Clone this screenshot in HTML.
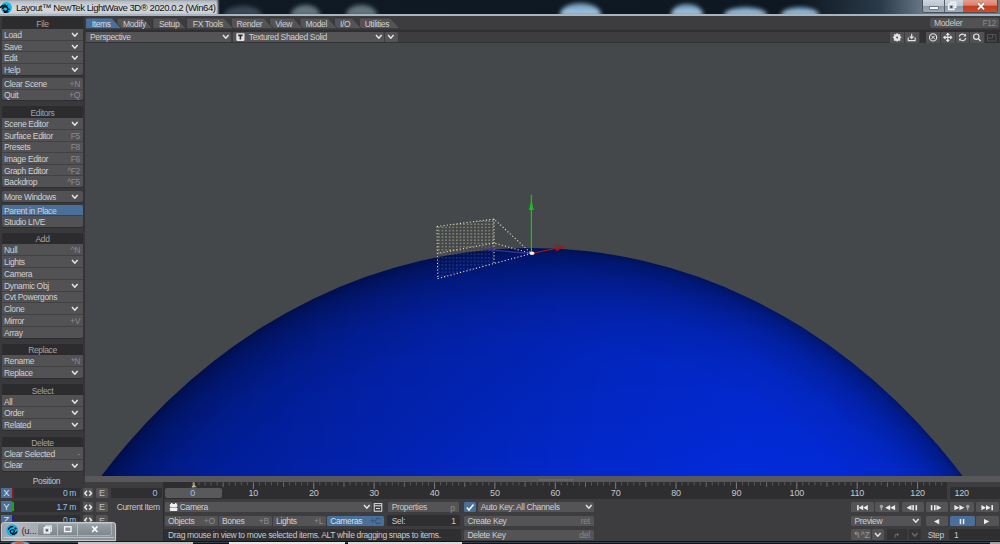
<!DOCTYPE html><html><head><meta charset="utf-8"><style>
html,body{margin:0;padding:0;width:1000px;height:544px;overflow:hidden;background:#3d3d40;font-family:"Liberation Sans",sans-serif;}
body>div,body>svg{position:absolute;}
</style></head><body>
<div style="left:0;top:0;width:1000px;height:15px;background:linear-gradient(90deg,#18222c 0,#101a24 240px,#0e1822 800px,#2a3a48 880px,#6a7a88 925px);overflow:hidden"><div style="position:absolute;left:224px;top:6px;width:38px;height:10px;background:rgba(100,120,135,.5);border-radius:50% 50% 0 0/90% 90% 0 0;filter:blur(2px)"></div><div style="position:absolute;left:291px;top:5px;width:29px;height:11px;background:rgba(130,150,158,.75);border-radius:50% 50% 0 0/90% 90% 0 0;filter:blur(2px)"></div><div style="position:absolute;left:346px;top:5px;width:31px;height:11px;background:rgba(130,150,158,.75);border-radius:50% 50% 0 0/90% 90% 0 0;filter:blur(2px)"></div><div style="position:absolute;left:560px;top:3px;width:41px;height:13px;background:linear-gradient(rgba(130,175,215,.8),rgba(175,215,245,1));border-radius:50% 50% 0 0/90% 90% 0 0;filter:blur(2px)"></div><div style="position:absolute;left:671px;top:4px;width:32px;height:12px;background:linear-gradient(rgba(130,175,215,.8),rgba(175,215,245,1));border-radius:50% 50% 0 0/90% 90% 0 0;filter:blur(2px)"></div><div style="position:absolute;left:724px;top:6.5px;width:43px;height:9.5px;background:linear-gradient(rgba(130,175,215,.8),rgba(175,215,245,1));border-radius:50% 50% 0 0/90% 90% 0 0;filter:blur(2px)"></div><div style="position:absolute;left:781px;top:6.5px;width:38px;height:9.5px;background:linear-gradient(rgba(130,175,215,.8),rgba(175,215,245,1));border-radius:50% 50% 0 0/90% 90% 0 0;filter:blur(2px)"></div><div style="position:absolute;left:-4px;top:-1px;width:222px;height:17px;background:linear-gradient(#a4acb4 0,#c8ccd2 5px,#d6d9dc 9px,#d0d4d8 13px,#b8c0c8 16px);filter:blur(1px)"></div></div>
<div style="left:0px;top:14px;width:1000px;height:1.5px;background:#a8b4c0;"></div>
<svg style="left:0;top:1px" width="14" height="14"><circle cx="6.4" cy="6.6" r="5.6" fill="#14b8ec"/><path d="M0 6.8 Q2 4.5 4 4.2 Q6 3.6 7.5 4.2 M2.6 8 Q2.8 5.8 5 5.6 Q7.6 5.6 7.8 8.2 Q7.6 10.2 5.4 10.4 Q3.6 10.2 3.4 8.6 M8.4 8.6 L9.6 8.2 M3.8 11.2 Q6.5 11.6 8.5 10.6" stroke="#04121e" stroke-width="1.5" fill="none"/><circle cx="5.4" cy="8.2" r="1.1" fill="#1ec8f8"/><circle cx="6.6" cy="3.4" r="0.9" fill="#30d0ff"/></svg>
<div style="left:16px;top:1.5px;height:12px;line-height:12px;color:#111;font-size:9.6px;letter-spacing:-0.48px;white-space:nowrap;">Layout™ NewTek LightWave 3D® 2020.0.2 (Win64)</div>
<div style="left:922.2px;top:-1px;width:75.7px;height:13.8px;box-sizing:border-box;border:1px solid #46525e;border-top:none;border-radius:0 0 3px 3px;overflow:hidden;background:#9aa8b6"><div style="position:absolute;left:0;top:0;width:20.5px;height:13px;background:linear-gradient(#d0d8e0 0,#bcc6d0 50%,#8898a8 54%,#9cacbc 100%)"></div><div style="position:absolute;left:20.5px;top:0;width:0.9px;height:13px;background:#56626e"></div><div style="position:absolute;left:21.4px;top:0;width:18.6px;height:13px;background:linear-gradient(#d0d8e0 0,#bcc6d0 50%,#8898a8 54%,#9cacbc 100%)"></div><div style="position:absolute;left:40px;top:0;width:35px;height:13px;background:linear-gradient(#e8a090 0,#d88474 48%,#c43c1c 54%,#d04c2c 100%)"></div></div>
<div style="left:930px;top:6.6px;width:7.5px;height:2.2px;background:#f8f8f8;box-shadow:0 0 0 0.5px #4a5058;"></div>
<svg style="left:947px;top:0.5px" width="11" height="10"><rect x="3.6" y="1.2" width="5.2" height="5.2" fill="none" stroke="#f4f4f4" stroke-width="1.3"/><rect x="1.6" y="3.2" width="5.4" height="5.4" fill="#aab6c2" stroke="#f4f4f4" stroke-width="1.3"/><rect x="3.4" y="5" width="1.9" height="1.9" fill="#3a4450"/></svg>
<svg style="left:975px;top:0.5px" width="12" height="11"><path d="M3 2.2 L9 8.4 M9 2.2 L3 8.4" stroke="#5a2a20" stroke-width="3" stroke-opacity="0.5"/><path d="M3 2.2 L9 8.4 M9 2.2 L3 8.4" stroke="#fafafa" stroke-width="2"/></svg>
<div style="left:0px;top:15.5px;width:85px;height:528.5px;background:#39393c;"></div>
<div style="left:83.2px;top:15.5px;width:1.8px;height:461px;background:#343437;"></div>
<div style="left:2px;top:17px;width:81px;height:11.5px;background:#2c2c2e;border-radius:2px 2px 0 0;"></div>
<div style="left:2px;top:17.55px;height:12px;line-height:12px;color:#a4a4a4;font-size:8.5px;letter-spacing:-0.35px;white-space:nowrap;width:81px;text-align:center;">File</div>
<div style="left:2px;top:28.5px;width:81px;height:46.4px;background:#525255;border-radius:0 0 2px 2px;box-shadow:0 1px 0 #2e2e30;"></div>
<div style="left:4px;top:28.9px;height:12px;line-height:12px;color:#d0d0d0;font-size:8.5px;letter-spacing:-0.35px;white-space:nowrap;">Load</div>
<svg style="left:70.7px;top:31.999999999999993px" width="7.6" height="5.2"><polyline points="1,1 3.8,4.2 6.6,1" fill="none" stroke="#e6e6e6" stroke-width="1.45"/></svg>
<div style="left:2px;top:39.6px;width:81px;height:1px;background:#414144;"></div>
<div style="left:4px;top:40.5px;height:12px;line-height:12px;color:#d0d0d0;font-size:8.5px;letter-spacing:-0.35px;white-space:nowrap;">Save</div>
<svg style="left:70.7px;top:43.599999999999994px" width="7.6" height="5.2"><polyline points="1,1 3.8,4.2 6.6,1" fill="none" stroke="#e6e6e6" stroke-width="1.45"/></svg>
<div style="left:2px;top:51.2px;width:81px;height:1px;background:#414144;"></div>
<div style="left:4px;top:52.1px;height:12px;line-height:12px;color:#d0d0d0;font-size:8.5px;letter-spacing:-0.35px;white-space:nowrap;">Edit</div>
<svg style="left:70.7px;top:55.199999999999996px" width="7.6" height="5.2"><polyline points="1,1 3.8,4.2 6.6,1" fill="none" stroke="#e6e6e6" stroke-width="1.45"/></svg>
<div style="left:2px;top:62.8px;width:81px;height:1px;background:#414144;"></div>
<div style="left:4px;top:63.69999999999999px;height:12px;line-height:12px;color:#d0d0d0;font-size:8.5px;letter-spacing:-0.35px;white-space:nowrap;">Help</div>
<svg style="left:70.7px;top:66.8px" width="7.6" height="5.2"><polyline points="1,1 3.8,4.2 6.6,1" fill="none" stroke="#e6e6e6" stroke-width="1.45"/></svg>
<div style="left:2px;top:78px;width:81px;height:22.2px;background:#525255;border-radius:2px 2px 2px 2px;box-shadow:0 1px 0 #2e2e30;"></div>
<div style="left:4px;top:78.14999999999999px;height:12px;line-height:12px;color:#d0d0d0;font-size:8.5px;letter-spacing:-0.35px;white-space:nowrap;">Clear Scene</div>
<div style="left:50px;top:78.14999999999999px;height:12px;line-height:12px;color:#8a8a8a;font-size:8.5px;letter-spacing:-0.35px;white-space:nowrap;width:30px;text-align:right;">+N</div>
<div style="left:2px;top:88.6px;width:81px;height:1px;background:#414144;"></div>
<div style="left:4px;top:89.24999999999999px;height:12px;line-height:12px;color:#d0d0d0;font-size:8.5px;letter-spacing:-0.35px;white-space:nowrap;">Quit</div>
<div style="left:50px;top:89.24999999999999px;height:12px;line-height:12px;color:#8a8a8a;font-size:8.5px;letter-spacing:-0.35px;white-space:nowrap;width:30px;text-align:right;">+Q</div>
<div style="left:2px;top:106.3px;width:81px;height:11.5px;background:#2c2c2e;border-radius:2px 2px 0 0;"></div>
<div style="left:2px;top:106.85px;height:12px;line-height:12px;color:#a4a4a4;font-size:8.5px;letter-spacing:-0.35px;white-space:nowrap;width:81px;text-align:center;">Editors</div>
<div style="left:2px;top:117.8px;width:81px;height:69.6px;background:#525255;border-radius:0 0 2px 2px;box-shadow:0 1px 0 #2e2e30;"></div>
<div style="left:4px;top:118.19999999999999px;height:12px;line-height:12px;color:#d0d0d0;font-size:8.5px;letter-spacing:-0.35px;white-space:nowrap;">Scene Editor</div>
<svg style="left:70.7px;top:121.3px" width="7.6" height="5.2"><polyline points="1,1 3.8,4.2 6.6,1" fill="none" stroke="#e6e6e6" stroke-width="1.45"/></svg>
<div style="left:2px;top:128.9px;width:81px;height:1px;background:#414144;"></div>
<div style="left:4px;top:129.8px;height:12px;line-height:12px;color:#d0d0d0;font-size:8.5px;letter-spacing:-0.35px;white-space:nowrap;">Surface Editor</div>
<div style="left:50px;top:129.8px;height:12px;line-height:12px;color:#8a8a8a;font-size:8.5px;letter-spacing:-0.35px;white-space:nowrap;width:30px;text-align:right;">F5</div>
<div style="left:2px;top:140.5px;width:81px;height:1px;background:#414144;"></div>
<div style="left:4px;top:141.4px;height:12px;line-height:12px;color:#d0d0d0;font-size:8.5px;letter-spacing:-0.35px;white-space:nowrap;">Presets</div>
<div style="left:50px;top:141.4px;height:12px;line-height:12px;color:#8a8a8a;font-size:8.5px;letter-spacing:-0.35px;white-space:nowrap;width:30px;text-align:right;">F8</div>
<div style="left:2px;top:152.1px;width:81px;height:1px;background:#414144;"></div>
<div style="left:4px;top:153.0px;height:12px;line-height:12px;color:#d0d0d0;font-size:8.5px;letter-spacing:-0.35px;white-space:nowrap;">Image Editor</div>
<div style="left:50px;top:153.0px;height:12px;line-height:12px;color:#8a8a8a;font-size:8.5px;letter-spacing:-0.35px;white-space:nowrap;width:30px;text-align:right;">F6</div>
<div style="left:2px;top:163.7px;width:81px;height:1px;background:#414144;"></div>
<div style="left:4px;top:164.6px;height:12px;line-height:12px;color:#d0d0d0;font-size:8.5px;letter-spacing:-0.35px;white-space:nowrap;">Graph Editor</div>
<div style="left:50px;top:164.6px;height:12px;line-height:12px;color:#8a8a8a;font-size:8.5px;letter-spacing:-0.35px;white-space:nowrap;width:30px;text-align:right;">^F2</div>
<div style="left:2px;top:175.3px;width:81px;height:1px;background:#414144;"></div>
<div style="left:4px;top:176.20000000000002px;height:12px;line-height:12px;color:#d0d0d0;font-size:8.5px;letter-spacing:-0.35px;white-space:nowrap;">Backdrop</div>
<div style="left:50px;top:176.20000000000002px;height:12px;line-height:12px;color:#8a8a8a;font-size:8.5px;letter-spacing:-0.35px;white-space:nowrap;width:30px;text-align:right;">^F5</div>
<div style="left:2px;top:191px;width:81px;height:10.8px;background:#525255;border-radius:2px 2px 2px 2px;box-shadow:0 1px 0 #2e2e30;"></div>
<div style="left:4px;top:191.0px;height:12px;line-height:12px;color:#d0d0d0;font-size:8.5px;letter-spacing:-0.35px;white-space:nowrap;">More Windows</div>
<svg style="left:70.7px;top:194.10000000000002px" width="7.6" height="5.2"><polyline points="1,1 3.8,4.2 6.6,1" fill="none" stroke="#e6e6e6" stroke-width="1.45"/></svg>
<div style="left:2px;top:204.7px;width:81px;height:22.1px;background:#525255;border-radius:2px 2px 2px 2px;box-shadow:0 1px 0 #2e2e30;"></div>
<div style="left:2px;top:204.7px;width:81px;height:11.05px;background:#4a6f99;border-radius:2px 2px 0 0;"></div>
<div style="left:4px;top:204.825px;height:12px;line-height:12px;color:#d0d0d0;font-size:8.5px;letter-spacing:-0.35px;white-space:nowrap;">Parent in Place</div>
<div style="left:2px;top:215.25px;width:81px;height:1px;background:#414144;"></div>
<div style="left:4px;top:215.875px;height:12px;line-height:12px;color:#d0d0d0;font-size:8.5px;letter-spacing:-0.35px;white-space:nowrap;">Studio LIVE</div>
<div style="left:2px;top:233.2px;width:81px;height:10.8px;background:#2c2c2e;border-radius:2px 2px 0 0;"></div>
<div style="left:2px;top:233.4px;height:12px;line-height:12px;color:#a4a4a4;font-size:8.5px;letter-spacing:-0.35px;white-space:nowrap;width:81px;text-align:center;">Add</div>
<div style="left:2px;top:244px;width:81px;height:94.0px;background:#525255;border-radius:0 0 2px 2px;box-shadow:0 1px 0 #2e2e30;"></div>
<div style="left:4px;top:244.475px;height:12px;line-height:12px;color:#d0d0d0;font-size:8.5px;letter-spacing:-0.35px;white-space:nowrap;">Null</div>
<div style="left:50px;top:244.475px;height:12px;line-height:12px;color:#8a8a8a;font-size:8.5px;letter-spacing:-0.35px;white-space:nowrap;width:30px;text-align:right;">^N</div>
<div style="left:2px;top:255.25px;width:81px;height:1px;background:#414144;"></div>
<div style="left:4px;top:256.225px;height:12px;line-height:12px;color:#d0d0d0;font-size:8.5px;letter-spacing:-0.35px;white-space:nowrap;">Lights</div>
<svg style="left:70.7px;top:259.325px" width="7.6" height="5.2"><polyline points="1,1 3.8,4.2 6.6,1" fill="none" stroke="#e6e6e6" stroke-width="1.45"/></svg>
<div style="left:2px;top:267.0px;width:81px;height:1px;background:#414144;"></div>
<div style="left:4px;top:267.975px;height:12px;line-height:12px;color:#d0d0d0;font-size:8.5px;letter-spacing:-0.35px;white-space:nowrap;">Camera</div>
<div style="left:2px;top:278.75px;width:81px;height:1px;background:#414144;"></div>
<div style="left:4px;top:279.725px;height:12px;line-height:12px;color:#d0d0d0;font-size:8.5px;letter-spacing:-0.35px;white-space:nowrap;">Dynamic Obj</div>
<svg style="left:70.7px;top:282.825px" width="7.6" height="5.2"><polyline points="1,1 3.8,4.2 6.6,1" fill="none" stroke="#e6e6e6" stroke-width="1.45"/></svg>
<div style="left:2px;top:290.5px;width:81px;height:1px;background:#414144;"></div>
<div style="left:4px;top:291.475px;height:12px;line-height:12px;color:#d0d0d0;font-size:8.5px;letter-spacing:-0.35px;white-space:nowrap;">Cvt Powergons</div>
<div style="left:2px;top:302.25px;width:81px;height:1px;background:#414144;"></div>
<div style="left:4px;top:303.225px;height:12px;line-height:12px;color:#d0d0d0;font-size:8.5px;letter-spacing:-0.35px;white-space:nowrap;">Clone</div>
<svg style="left:70.7px;top:306.325px" width="7.6" height="5.2"><polyline points="1,1 3.8,4.2 6.6,1" fill="none" stroke="#e6e6e6" stroke-width="1.45"/></svg>
<div style="left:2px;top:314.0px;width:81px;height:1px;background:#414144;"></div>
<div style="left:4px;top:314.975px;height:12px;line-height:12px;color:#d0d0d0;font-size:8.5px;letter-spacing:-0.35px;white-space:nowrap;">Mirror</div>
<div style="left:50px;top:314.975px;height:12px;line-height:12px;color:#8a8a8a;font-size:8.5px;letter-spacing:-0.35px;white-space:nowrap;width:30px;text-align:right;">+V</div>
<div style="left:2px;top:325.75px;width:81px;height:1px;background:#414144;"></div>
<div style="left:4px;top:326.725px;height:12px;line-height:12px;color:#d0d0d0;font-size:8.5px;letter-spacing:-0.35px;white-space:nowrap;">Array</div>
<div style="left:2px;top:344px;width:81px;height:11px;background:#2c2c2e;border-radius:2px 2px 0 0;"></div>
<div style="left:2px;top:344.3px;height:12px;line-height:12px;color:#a4a4a4;font-size:8.5px;letter-spacing:-0.35px;white-space:nowrap;width:81px;text-align:center;">Replace</div>
<div style="left:2px;top:355px;width:81px;height:23.0px;background:#525255;border-radius:0 0 2px 2px;box-shadow:0 1px 0 #2e2e30;"></div>
<div style="left:4px;top:355.35px;height:12px;line-height:12px;color:#d0d0d0;font-size:8.5px;letter-spacing:-0.35px;white-space:nowrap;">Rename</div>
<div style="left:50px;top:355.35px;height:12px;line-height:12px;color:#8a8a8a;font-size:8.5px;letter-spacing:-0.35px;white-space:nowrap;width:30px;text-align:right;">*N</div>
<div style="left:2px;top:366.0px;width:81px;height:1px;background:#414144;"></div>
<div style="left:4px;top:366.85px;height:12px;line-height:12px;color:#d0d0d0;font-size:8.5px;letter-spacing:-0.35px;white-space:nowrap;">Replace</div>
<svg style="left:70.7px;top:369.95px" width="7.6" height="5.2"><polyline points="1,1 3.8,4.2 6.6,1" fill="none" stroke="#e6e6e6" stroke-width="1.45"/></svg>
<div style="left:2px;top:384.1px;width:81px;height:11.2px;background:#2c2c2e;border-radius:2px 2px 0 0;"></div>
<div style="left:2px;top:384.50000000000006px;height:12px;line-height:12px;color:#a4a4a4;font-size:8.5px;letter-spacing:-0.35px;white-space:nowrap;width:81px;text-align:center;">Select</div>
<div style="left:2px;top:395.3px;width:81px;height:34.410000000000004px;background:#525255;border-radius:0 0 2px 2px;box-shadow:0 1px 0 #2e2e30;"></div>
<div style="left:4px;top:395.63500000000005px;height:12px;line-height:12px;color:#d0d0d0;font-size:8.5px;letter-spacing:-0.35px;white-space:nowrap;">All</div>
<svg style="left:70.7px;top:398.735px" width="7.6" height="5.2"><polyline points="1,1 3.8,4.2 6.6,1" fill="none" stroke="#e6e6e6" stroke-width="1.45"/></svg>
<div style="left:2px;top:406.27000000000004px;width:81px;height:1px;background:#414144;"></div>
<div style="left:4px;top:407.1050000000001px;height:12px;line-height:12px;color:#d0d0d0;font-size:8.5px;letter-spacing:-0.35px;white-space:nowrap;">Order</div>
<svg style="left:70.7px;top:410.20500000000004px" width="7.6" height="5.2"><polyline points="1,1 3.8,4.2 6.6,1" fill="none" stroke="#e6e6e6" stroke-width="1.45"/></svg>
<div style="left:2px;top:417.74px;width:81px;height:1px;background:#414144;"></div>
<div style="left:4px;top:418.57500000000005px;height:12px;line-height:12px;color:#d0d0d0;font-size:8.5px;letter-spacing:-0.35px;white-space:nowrap;">Related</div>
<svg style="left:70.7px;top:421.675px" width="7.6" height="5.2"><polyline points="1,1 3.8,4.2 6.6,1" fill="none" stroke="#e6e6e6" stroke-width="1.45"/></svg>
<div style="left:2px;top:436.5px;width:81px;height:10.9px;background:#2c2c2e;border-radius:2px 2px 0 0;"></div>
<div style="left:2px;top:436.75px;height:12px;line-height:12px;color:#a4a4a4;font-size:8.5px;letter-spacing:-0.35px;white-space:nowrap;width:81px;text-align:center;">Delete</div>
<div style="left:2px;top:447.4px;width:81px;height:23.3px;background:#525255;border-radius:0 0 2px 2px;box-shadow:0 1px 0 #2e2e30;"></div>
<div style="left:4px;top:447.825px;height:12px;line-height:12px;color:#d0d0d0;font-size:8.5px;letter-spacing:-0.35px;white-space:nowrap;">Clear Selected</div>
<div style="left:50px;top:447.825px;height:12px;line-height:12px;color:#8a8a8a;font-size:8.5px;letter-spacing:-0.35px;white-space:nowrap;width:30px;text-align:right;">-</div>
<div style="left:2px;top:458.54999999999995px;width:81px;height:1px;background:#414144;"></div>
<div style="left:4px;top:459.47499999999997px;height:12px;line-height:12px;color:#d0d0d0;font-size:8.5px;letter-spacing:-0.35px;white-space:nowrap;">Clear</div>
<svg style="left:70.7px;top:462.57499999999993px" width="7.6" height="5.2"><polyline points="1,1 3.8,4.2 6.6,1" fill="none" stroke="#e6e6e6" stroke-width="1.45"/></svg>
<div style="left:6px;top:474.9px;height:12px;line-height:12px;color:#c4c4c4;font-size:8.5px;letter-spacing:-0.35px;white-space:nowrap;width:81px;text-align:center;">Position</div>
<div style="left:1.2px;top:487.6px;width:10.6px;height:10.8px;background:#4c6f98;"></div>
<div style="left:1.2px;top:487.0px;height:12px;line-height:12px;color:#d8e4f0;font-size:9.5px;letter-spacing:0px;white-space:nowrap;width:10.6px;text-align:center;">X</div>
<div style="left:12px;top:487.6px;width:67.5px;height:10.8px;background:#2f2f31;"></div>
<div style="left:12px;top:488.1px;width:1.8px;height:9.8px;background:#8a1818;"></div>
<div style="left:20px;top:487.0px;height:12px;line-height:12px;color:#9cc0e8;font-size:8.5px;letter-spacing:-0.35px;white-space:nowrap;width:56px;text-align:right;">0 m</div>
<div style="left:83px;top:487.6px;width:10.3px;height:10.8px;background:#555558;border-radius:1.5px;"></div>
<svg style="left:83px;top:487.6px" width="10.3" height="10.8"><path d="M4 2.8 L1.8 5.4 L4 8 M6.3 2.8 L8.5 5.4 L6.3 8" fill="none" stroke="#e8e8e8" stroke-width="1.5"/></svg>
<div style="left:96px;top:487.6px;width:12px;height:10.8px;background:#555558;border-radius:1.5px;"></div>
<div style="left:96px;top:487.0px;height:12px;line-height:12px;color:#c0c0c0;font-size:9px;letter-spacing:0px;white-space:nowrap;width:12px;text-align:center;">E</div>
<div style="left:1.2px;top:501.20000000000005px;width:10.6px;height:10.8px;background:#4c6f98;"></div>
<div style="left:1.2px;top:500.6px;height:12px;line-height:12px;color:#d8e4f0;font-size:9.5px;letter-spacing:0px;white-space:nowrap;width:10.6px;text-align:center;">Y</div>
<div style="left:12px;top:501.20000000000005px;width:67.5px;height:10.8px;background:#2f2f31;"></div>
<div style="left:12px;top:501.70000000000005px;width:1.8px;height:9.8px;background:#22a022;"></div>
<div style="left:20px;top:500.6px;height:12px;line-height:12px;color:#9cc0e8;font-size:8.5px;letter-spacing:-0.35px;white-space:nowrap;width:56px;text-align:right;">1.7 m</div>
<div style="left:83px;top:501.20000000000005px;width:10.3px;height:10.8px;background:#555558;border-radius:1.5px;"></div>
<svg style="left:83px;top:501.20000000000005px" width="10.3" height="10.8"><path d="M4 2.8 L1.8 5.4 L4 8 M6.3 2.8 L8.5 5.4 L6.3 8" fill="none" stroke="#e8e8e8" stroke-width="1.5"/></svg>
<div style="left:96px;top:501.20000000000005px;width:12px;height:10.8px;background:#555558;border-radius:1.5px;"></div>
<div style="left:96px;top:500.6px;height:12px;line-height:12px;color:#c0c0c0;font-size:9px;letter-spacing:0px;white-space:nowrap;width:12px;text-align:center;">E</div>
<div style="left:1.2px;top:514.8000000000001px;width:10.6px;height:10.8px;background:#4c6f98;"></div>
<div style="left:1.2px;top:514.2px;height:12px;line-height:12px;color:#d8e4f0;font-size:9.5px;letter-spacing:0px;white-space:nowrap;width:10.6px;text-align:center;">Z</div>
<div style="left:12px;top:514.8000000000001px;width:67.5px;height:10.8px;background:#2f2f31;"></div>
<div style="left:12px;top:515.3000000000001px;width:1.8px;height:9.8px;background:#2020a0;"></div>
<div style="left:20px;top:514.2px;height:12px;line-height:12px;color:#9cc0e8;font-size:8.5px;letter-spacing:-0.35px;white-space:nowrap;width:56px;text-align:right;">0 m</div>
<div style="left:83px;top:514.8000000000001px;width:10.3px;height:10.8px;background:#555558;border-radius:1.5px;"></div>
<svg style="left:83px;top:514.8000000000001px" width="10.3" height="10.8"><path d="M4 2.8 L1.8 5.4 L4 8 M6.3 2.8 L8.5 5.4 L6.3 8" fill="none" stroke="#e8e8e8" stroke-width="1.5"/></svg>
<div style="left:96px;top:514.8000000000001px;width:12px;height:10.8px;background:#555558;border-radius:1.5px;"></div>
<div style="left:96px;top:514.2px;height:12px;line-height:12px;color:#c0c0c0;font-size:9px;letter-spacing:0px;white-space:nowrap;width:12px;text-align:center;">E</div>
<div style="left:85px;top:15.5px;width:915px;height:16px;background:#3d3d40;"></div>
<svg style="left:0;top:0" width="420" height="32"><path d="M359.2 28.7 L359.2 19.5 Q359.2 18 360.7 18 L390.4 18 L400 28.7 Z" fill="#545457" stroke="#343436" stroke-width="0.8"/><path d="M334.4 28.7 L334.4 19.5 Q334.4 18 335.9 18 L352.0 18 L361.6 28.7 Z" fill="#545457" stroke="#343436" stroke-width="0.8"/><path d="M300 28.7 L300 19.5 Q300 18 301.5 18 L328.0 18 L337.6 28.7 Z" fill="#545457" stroke="#343436" stroke-width="0.8"/><path d="M269.6 28.7 L269.6 19.5 Q269.6 18 271.1 18 L293.59999999999997 18 L303.2 28.7 Z" fill="#545457" stroke="#343436" stroke-width="0.8"/><path d="M231.2 28.7 L231.2 19.5 Q231.2 18 232.7 18 L264.0 18 L273.6 28.7 Z" fill="#545457" stroke="#343436" stroke-width="0.8"/><path d="M186.4 28.7 L186.4 19.5 Q186.4 18 187.9 18 L224.0 18 L233.6 28.7 Z" fill="#545457" stroke="#343436" stroke-width="0.8"/><path d="M152.8 28.7 L152.8 19.5 Q152.8 18 154.3 18 L176.8 18 L186.4 28.7 Z" fill="#545457" stroke="#343436" stroke-width="0.8"/><path d="M116.8 28.7 L116.8 19.5 Q116.8 18 118.3 18 L143.20000000000002 18 L152.8 28.7 Z" fill="#545457" stroke="#343436" stroke-width="0.8"/><path d="M85.6 28.7 L85.6 19.5 Q85.6 18 87.1 18 L112.0 18 L121.6 28.7 Z" fill="#4a6f99" stroke="#343436" stroke-width="0.8"/></svg>
<div style="left:91.7px;top:17.6px;height:12px;line-height:12px;color:#d6dce4;font-size:8.5px;letter-spacing:-0.35px;white-space:nowrap;">Items</div>
<div style="left:123px;top:17.6px;height:12px;line-height:12px;color:#cfcfcf;font-size:8.5px;letter-spacing:-0.35px;white-space:nowrap;">Modify</div>
<div style="left:158.9px;top:17.6px;height:12px;line-height:12px;color:#cfcfcf;font-size:8.5px;letter-spacing:-0.35px;white-space:nowrap;">Setup</div>
<div style="left:192.8px;top:17.6px;height:12px;line-height:12px;color:#cfcfcf;font-size:8.5px;letter-spacing:-0.35px;white-space:nowrap;">FX Tools</div>
<div style="left:236.5px;top:17.6px;height:12px;line-height:12px;color:#cfcfcf;font-size:8.5px;letter-spacing:-0.35px;white-space:nowrap;">Render</div>
<div style="left:275.2px;top:17.6px;height:12px;line-height:12px;color:#cfcfcf;font-size:8.5px;letter-spacing:-0.35px;white-space:nowrap;">View</div>
<div style="left:305.6px;top:17.6px;height:12px;line-height:12px;color:#cfcfcf;font-size:8.5px;letter-spacing:-0.35px;white-space:nowrap;">Model</div>
<div style="left:340px;top:17.6px;height:12px;line-height:12px;color:#cfcfcf;font-size:8.5px;letter-spacing:-0.35px;white-space:nowrap;">I/O</div>
<div style="left:364.8px;top:17.6px;height:12px;line-height:12px;color:#cfcfcf;font-size:8.5px;letter-spacing:-0.35px;white-space:nowrap;">Utilities</div>
<div style="left:85px;top:28.7px;width:915px;height:1.8px;background:#38383b;"></div>
<div style="left:85px;top:30.3px;width:915px;height:1.4px;background:#303033;"></div>
<div style="left:930.4px;top:18px;width:68.4px;height:10.2px;background:#525255;border-radius:2px;"></div>
<div style="left:934px;top:17.2px;height:12px;line-height:12px;color:#c8c8c8;font-size:8.5px;letter-spacing:-0.35px;white-space:nowrap;">Modeler</div>
<div style="left:960px;top:17.2px;height:12px;line-height:12px;color:#8a8a8a;font-size:8.5px;letter-spacing:-0.35px;white-space:nowrap;width:36px;text-align:right;">F12</div>
<div style="left:85px;top:31.5px;width:915px;height:11px;background:#3d3d40;"></div>
<div style="left:85.6px;top:31.8px;width:145.4px;height:10.2px;background:#545457;border-radius:1.5px;"></div>
<div style="left:90px;top:30.799999999999997px;height:12px;line-height:12px;color:#d0d0d0;font-size:8.5px;letter-spacing:-0.35px;white-space:nowrap;">Perspective</div>
<svg style="left:221.79999999999998px;top:34.199999999999996px" width="7.6" height="5.2"><polyline points="1,1 3.8,4.2 6.6,1" fill="none" stroke="#e6e6e6" stroke-width="1.45"/></svg>
<div style="left:232.6px;top:31.8px;width:151.4px;height:10.2px;background:#545457;border-radius:1.5px;"></div>
<svg style="left:236px;top:33px" width="9" height="9"><rect x="0.3" y="0.3" width="8.2" height="7.6" rx="0.8" fill="#e4e4e4"/><path d="M2.2 2.4 H6.6 M4.4 2.4 V6.6" stroke="#2a2a2a" stroke-width="1.6"/></svg>
<div style="left:248.8px;top:30.799999999999997px;height:12px;line-height:12px;color:#d0d0d0;font-size:8.5px;letter-spacing:-0.35px;white-space:nowrap;">Textured Shaded Solid</div>
<svg style="left:374.59999999999997px;top:34.199999999999996px" width="7.6" height="5.2"><polyline points="1,1 3.8,4.2 6.6,1" fill="none" stroke="#e6e6e6" stroke-width="1.45"/></svg>
<div style="left:384.8px;top:31.8px;width:12.8px;height:10.2px;background:#545457;border-radius:1.5px;"></div>
<svg style="left:387.0px;top:34.199999999999996px" width="7.6" height="5.2"><polyline points="1,1 3.8,4.2 6.6,1" fill="none" stroke="#e6e6e6" stroke-width="1.45"/></svg>
<div style="left:85px;top:42px;width:915px;height:0.8px;background:#333335;"></div>
<div style="left:890.2px;top:31.8px;width:13.799999999999955px;height:10.8px;background:#525255;"></div>
<div style="left:905px;top:31.8px;width:13.700000000000045px;height:10.8px;background:#525255;"></div>
<div style="left:926.2px;top:31.8px;width:13.799999999999955px;height:10.8px;background:#525255;"></div>
<div style="left:941px;top:31.8px;width:13.600000000000023px;height:10.8px;background:#525255;"></div>
<div style="left:956px;top:31.8px;width:13.399999999999977px;height:10.8px;background:#525255;"></div>
<div style="left:970.4px;top:31.8px;width:13.399999999999977px;height:10.8px;background:#525255;"></div>
<div style="left:985px;top:31.8px;width:13.5px;height:10.8px;background:#2f2f31;"></div>
<div style="left:919.5px;top:31.8px;width:6px;height:10.8px;background:#323234;"></div>
<svg style="left:890px;top:31.8px" width="110" height="11"><circle cx="7.1" cy="5.4" r="2.6" fill="none" stroke="#e4e4e4" stroke-width="1.8"/><path d="M7.1 1.2 V9.6 M2.9 5.4 H11.3 M4.1 2.4 L10.1 8.4 M10.1 2.4 L4.1 8.4" stroke="#e4e4e4" stroke-width="1.4"/><circle cx="7.1" cy="5.4" r="1" fill="#525255"/><path d="M18.2 5.5 V8.6 H25.2 V5.5" fill="none" stroke="#e4e4e4" stroke-width="1.1"/><path d="M21.7 1.8 V6.2 M19.8 4.4 L21.7 6.4 L23.6 4.4" fill="none" stroke="#e4e4e4" stroke-width="1.1"/><circle cx="43.1" cy="5.4" r="3.6" fill="none" stroke="#e4e4e4" stroke-width="1.1"/><path d="M41.3 3.6 L44.9 7.2 M44.9 3.6 L41.3 7.2" stroke="#e4e4e4" stroke-width="1"/><path d="M57.8 1.3 V9.5 M53.7 5.4 H61.9" stroke="#e4e4e4" stroke-width="1.1"/><path d="M56.3 2.8 L57.8 1 L59.3 2.8 Z M56.3 8 L57.8 9.8 L59.3 8 Z M55.2 3.9 L53.4 5.4 L55.2 6.9 Z M60.4 3.9 L62.2 5.4 L60.4 6.9 Z" fill="#e4e4e4" stroke="#e4e4e4" stroke-width="0.8"/><path d="M69.2 4.6 A3.3 3.3 0 0 1 75.2 3.6 M75.8 6.2 A3.3 3.3 0 0 1 69.8 7.2" fill="none" stroke="#e4e4e4" stroke-width="1.2"/><path d="M76 1.8 L76 4.4 L73.4 4.4 Z M69 9 L69 6.4 L71.6 6.4 Z" fill="#e4e4e4"/><circle cx="86.3" cy="4.7" r="2.7" fill="none" stroke="#e4e4e4" stroke-width="1.2"/><path d="M88.2 6.6 L90.6 9" stroke="#e4e4e4" stroke-width="1.4"/><path d="M97.5 2.5 H106 V9 H97.5 Z M102.5 2.5 V6 H97.5" fill="none" stroke="#555558" stroke-width="1"/></svg>
<div style="left:85px;top:42.8px;width:915px;height:433.4px;background:#45484b;overflow:hidden"><div style="position:absolute;left:-128px;top:204.8px;width:1150px;height:1352px;border-radius:50%;background:radial-gradient(ellipse closest-side at 50% 50%,#fff 0%,#fff 86%,#f0f0f0 92%,#d4d4d4 96%,#aeaeae 98.8%,#8c8c8c 100%),linear-gradient(100deg,#8a8a8a 8.4%,#b2b2b2 21%,#d6d6d6 35.6%,#f0f0f0 48.2%,#fff 59%,#f8f8f8 73.5%,#e6e6e6 88%),linear-gradient(180deg,#c8c8c8 0%,#e6e6e6 6.1%,#fff 16.9%),#022bda;background-blend-mode:multiply;"></div></div>
<svg style="left:420px;top:185px" width="160" height="100"><defs><pattern id="dots" width="3.6" height="3.2" patternUnits="userSpaceOnUse"><rect x="0.3" y="0.3" width="1.1" height="1.1" fill="#e4dfae"/></pattern><pattern id="dots2" width="3.6" height="3.6" patternUnits="userSpaceOnUse"><rect x="0.3" y="0.3" width="1" height="1" fill="#c8c8b0"/></pattern></defs><path d="M17 41.5 L74 34 L74 58 L17 68.5 Z" fill="url(#dots)" opacity="0.85"/><path d="M17 68.5 L74 58 L74 79 L17.7 93.6 Z" fill="url(#dots2)" opacity="0.45"/><path d="M17 41.5 L74 34 L111.4 68.5 M17 68.5 L74 58 L111.4 68.5 M17.7 93.6 L111.4 68.5 M17 41.5 L17.7 93.6 M74 34 L74 79" stroke="#e8e4b8" stroke-width="1.1" stroke-dasharray="1.1 2.2" fill="none"/><path d="M111.4 68.5 L143.2 61.8" stroke="#a01818" stroke-width="1.2"/><path d="M135.5 60 L143.5 61.6 L136.5 65.5 Z" fill="none" stroke="#a01818" stroke-width="1.2"/><path d="M111.4 68.5 L66 64.7" stroke="#3a3098" stroke-width="1.3"/><path d="M66 64.7 L74 62.3 L73.4 66.8 Z" fill="#3a3098"/><path d="M111.4 68.5 V9.7" stroke="#18c018" stroke-width="1.3"/><path d="M111.4 15 L109 25 L113.8 25 Z" fill="#18c018"/><ellipse cx="112" cy="68.2" rx="2.6" ry="1.8" fill="#f0f0e0"/></svg>
<div style="left:85px;top:475.8px;width:915px;height:0.8px;background:#3a3a3c;"></div>
<div style="left:85px;top:476.4px;width:915px;height:5.8px;background:#58585a;"></div>
<svg style="left:539px;top:478.8px" width="36" height="2"><rect x="0.00" y="0.3" width="1.2" height="1.2" fill="#828284"/><rect x="2.30" y="0.3" width="1.2" height="1.2" fill="#828284"/><rect x="4.60" y="0.3" width="1.2" height="1.2" fill="#828284"/><rect x="6.90" y="0.3" width="1.2" height="1.2" fill="#828284"/><rect x="9.20" y="0.3" width="1.2" height="1.2" fill="#828284"/><rect x="11.50" y="0.3" width="1.2" height="1.2" fill="#828284"/><rect x="13.80" y="0.3" width="1.2" height="1.2" fill="#828284"/><rect x="16.10" y="0.3" width="1.2" height="1.2" fill="#828284"/><rect x="18.40" y="0.3" width="1.2" height="1.2" fill="#828284"/><rect x="20.70" y="0.3" width="1.2" height="1.2" fill="#828284"/><rect x="23.00" y="0.3" width="1.2" height="1.2" fill="#828284"/><rect x="25.30" y="0.3" width="1.2" height="1.2" fill="#828284"/><rect x="27.60" y="0.3" width="1.2" height="1.2" fill="#828284"/><rect x="29.90" y="0.3" width="1.2" height="1.2" fill="#828284"/><rect x="32.20" y="0.3" width="1.2" height="1.2" fill="#828284"/></svg>
<div style="left:85px;top:482.2px;width:915px;height:62px;background:#3d3d40;"></div>
<div style="left:163px;top:482.2px;width:784px;height:17px;background:#2e2e30;"></div>
<svg style="left:163px;top:482.2px" width="784" height="17"><rect x="29.50" y="0.3" width="1" height="6.6" fill="#7e7e80"/><rect x="35.54" y="0.3" width="1" height="3" fill="#5a5a5c"/><rect x="41.58" y="0.3" width="1" height="3" fill="#5a5a5c"/><rect x="47.61" y="0.3" width="1" height="3" fill="#5a5a5c"/><rect x="53.65" y="0.3" width="1" height="3" fill="#5a5a5c"/><rect x="59.69" y="0.3" width="1" height="4.6" fill="#6c6c6e"/><rect x="65.73" y="0.3" width="1" height="3" fill="#5a5a5c"/><rect x="71.77" y="0.3" width="1" height="3" fill="#5a5a5c"/><rect x="77.80" y="0.3" width="1" height="3" fill="#5a5a5c"/><rect x="83.84" y="0.3" width="1" height="3" fill="#5a5a5c"/><rect x="89.88" y="0.3" width="1" height="6.6" fill="#7e7e80"/><rect x="95.92" y="0.3" width="1" height="3" fill="#5a5a5c"/><rect x="101.96" y="0.3" width="1" height="3" fill="#5a5a5c"/><rect x="107.99" y="0.3" width="1" height="3" fill="#5a5a5c"/><rect x="114.03" y="0.3" width="1" height="3" fill="#5a5a5c"/><rect x="120.07" y="0.3" width="1" height="4.6" fill="#6c6c6e"/><rect x="126.11" y="0.3" width="1" height="3" fill="#5a5a5c"/><rect x="132.15" y="0.3" width="1" height="3" fill="#5a5a5c"/><rect x="138.18" y="0.3" width="1" height="3" fill="#5a5a5c"/><rect x="144.22" y="0.3" width="1" height="3" fill="#5a5a5c"/><rect x="150.26" y="0.3" width="1" height="6.6" fill="#7e7e80"/><rect x="156.30" y="0.3" width="1" height="3" fill="#5a5a5c"/><rect x="162.34" y="0.3" width="1" height="3" fill="#5a5a5c"/><rect x="168.37" y="0.3" width="1" height="3" fill="#5a5a5c"/><rect x="174.41" y="0.3" width="1" height="3" fill="#5a5a5c"/><rect x="180.45" y="0.3" width="1" height="4.6" fill="#6c6c6e"/><rect x="186.49" y="0.3" width="1" height="3" fill="#5a5a5c"/><rect x="192.53" y="0.3" width="1" height="3" fill="#5a5a5c"/><rect x="198.56" y="0.3" width="1" height="3" fill="#5a5a5c"/><rect x="204.60" y="0.3" width="1" height="3" fill="#5a5a5c"/><rect x="210.64" y="0.3" width="1" height="6.6" fill="#7e7e80"/><rect x="216.68" y="0.3" width="1" height="3" fill="#5a5a5c"/><rect x="222.72" y="0.3" width="1" height="3" fill="#5a5a5c"/><rect x="228.75" y="0.3" width="1" height="3" fill="#5a5a5c"/><rect x="234.79" y="0.3" width="1" height="3" fill="#5a5a5c"/><rect x="240.83" y="0.3" width="1" height="4.6" fill="#6c6c6e"/><rect x="246.87" y="0.3" width="1" height="3" fill="#5a5a5c"/><rect x="252.91" y="0.3" width="1" height="3" fill="#5a5a5c"/><rect x="258.94" y="0.3" width="1" height="3" fill="#5a5a5c"/><rect x="264.98" y="0.3" width="1" height="3" fill="#5a5a5c"/><rect x="271.02" y="0.3" width="1" height="6.6" fill="#7e7e80"/><rect x="277.06" y="0.3" width="1" height="3" fill="#5a5a5c"/><rect x="283.10" y="0.3" width="1" height="3" fill="#5a5a5c"/><rect x="289.13" y="0.3" width="1" height="3" fill="#5a5a5c"/><rect x="295.17" y="0.3" width="1" height="3" fill="#5a5a5c"/><rect x="301.21" y="0.3" width="1" height="4.6" fill="#6c6c6e"/><rect x="307.25" y="0.3" width="1" height="3" fill="#5a5a5c"/><rect x="313.29" y="0.3" width="1" height="3" fill="#5a5a5c"/><rect x="319.32" y="0.3" width="1" height="3" fill="#5a5a5c"/><rect x="325.36" y="0.3" width="1" height="3" fill="#5a5a5c"/><rect x="331.40" y="0.3" width="1" height="6.6" fill="#7e7e80"/><rect x="337.44" y="0.3" width="1" height="3" fill="#5a5a5c"/><rect x="343.48" y="0.3" width="1" height="3" fill="#5a5a5c"/><rect x="349.51" y="0.3" width="1" height="3" fill="#5a5a5c"/><rect x="355.55" y="0.3" width="1" height="3" fill="#5a5a5c"/><rect x="361.59" y="0.3" width="1" height="4.6" fill="#6c6c6e"/><rect x="367.63" y="0.3" width="1" height="3" fill="#5a5a5c"/><rect x="373.67" y="0.3" width="1" height="3" fill="#5a5a5c"/><rect x="379.70" y="0.3" width="1" height="3" fill="#5a5a5c"/><rect x="385.74" y="0.3" width="1" height="3" fill="#5a5a5c"/><rect x="391.78" y="0.3" width="1" height="6.6" fill="#7e7e80"/><rect x="397.82" y="0.3" width="1" height="3" fill="#5a5a5c"/><rect x="403.86" y="0.3" width="1" height="3" fill="#5a5a5c"/><rect x="409.89" y="0.3" width="1" height="3" fill="#5a5a5c"/><rect x="415.93" y="0.3" width="1" height="3" fill="#5a5a5c"/><rect x="421.97" y="0.3" width="1" height="4.6" fill="#6c6c6e"/><rect x="428.01" y="0.3" width="1" height="3" fill="#5a5a5c"/><rect x="434.05" y="0.3" width="1" height="3" fill="#5a5a5c"/><rect x="440.08" y="0.3" width="1" height="3" fill="#5a5a5c"/><rect x="446.12" y="0.3" width="1" height="3" fill="#5a5a5c"/><rect x="452.16" y="0.3" width="1" height="6.6" fill="#7e7e80"/><rect x="458.20" y="0.3" width="1" height="3" fill="#5a5a5c"/><rect x="464.24" y="0.3" width="1" height="3" fill="#5a5a5c"/><rect x="470.27" y="0.3" width="1" height="3" fill="#5a5a5c"/><rect x="476.31" y="0.3" width="1" height="3" fill="#5a5a5c"/><rect x="482.35" y="0.3" width="1" height="4.6" fill="#6c6c6e"/><rect x="488.39" y="0.3" width="1" height="3" fill="#5a5a5c"/><rect x="494.43" y="0.3" width="1" height="3" fill="#5a5a5c"/><rect x="500.46" y="0.3" width="1" height="3" fill="#5a5a5c"/><rect x="506.50" y="0.3" width="1" height="3" fill="#5a5a5c"/><rect x="512.54" y="0.3" width="1" height="6.6" fill="#7e7e80"/><rect x="518.58" y="0.3" width="1" height="3" fill="#5a5a5c"/><rect x="524.62" y="0.3" width="1" height="3" fill="#5a5a5c"/><rect x="530.65" y="0.3" width="1" height="3" fill="#5a5a5c"/><rect x="536.69" y="0.3" width="1" height="3" fill="#5a5a5c"/><rect x="542.73" y="0.3" width="1" height="4.6" fill="#6c6c6e"/><rect x="548.77" y="0.3" width="1" height="3" fill="#5a5a5c"/><rect x="554.81" y="0.3" width="1" height="3" fill="#5a5a5c"/><rect x="560.84" y="0.3" width="1" height="3" fill="#5a5a5c"/><rect x="566.88" y="0.3" width="1" height="3" fill="#5a5a5c"/><rect x="572.92" y="0.3" width="1" height="6.6" fill="#7e7e80"/><rect x="578.96" y="0.3" width="1" height="3" fill="#5a5a5c"/><rect x="585.00" y="0.3" width="1" height="3" fill="#5a5a5c"/><rect x="591.03" y="0.3" width="1" height="3" fill="#5a5a5c"/><rect x="597.07" y="0.3" width="1" height="3" fill="#5a5a5c"/><rect x="603.11" y="0.3" width="1" height="4.6" fill="#6c6c6e"/><rect x="609.15" y="0.3" width="1" height="3" fill="#5a5a5c"/><rect x="615.19" y="0.3" width="1" height="3" fill="#5a5a5c"/><rect x="621.22" y="0.3" width="1" height="3" fill="#5a5a5c"/><rect x="627.26" y="0.3" width="1" height="3" fill="#5a5a5c"/><rect x="633.30" y="0.3" width="1" height="6.6" fill="#7e7e80"/><rect x="639.34" y="0.3" width="1" height="3" fill="#5a5a5c"/><rect x="645.38" y="0.3" width="1" height="3" fill="#5a5a5c"/><rect x="651.41" y="0.3" width="1" height="3" fill="#5a5a5c"/><rect x="657.45" y="0.3" width="1" height="3" fill="#5a5a5c"/><rect x="663.49" y="0.3" width="1" height="4.6" fill="#6c6c6e"/><rect x="669.53" y="0.3" width="1" height="3" fill="#5a5a5c"/><rect x="675.57" y="0.3" width="1" height="3" fill="#5a5a5c"/><rect x="681.60" y="0.3" width="1" height="3" fill="#5a5a5c"/><rect x="687.64" y="0.3" width="1" height="3" fill="#5a5a5c"/><rect x="693.68" y="0.3" width="1" height="6.6" fill="#7e7e80"/><rect x="699.72" y="0.3" width="1" height="3" fill="#5a5a5c"/><rect x="705.76" y="0.3" width="1" height="3" fill="#5a5a5c"/><rect x="711.79" y="0.3" width="1" height="3" fill="#5a5a5c"/><rect x="717.83" y="0.3" width="1" height="3" fill="#5a5a5c"/><rect x="723.87" y="0.3" width="1" height="4.6" fill="#6c6c6e"/><rect x="729.91" y="0.3" width="1" height="3" fill="#5a5a5c"/><rect x="735.95" y="0.3" width="1" height="3" fill="#5a5a5c"/><rect x="741.98" y="0.3" width="1" height="3" fill="#5a5a5c"/><rect x="748.02" y="0.3" width="1" height="3" fill="#5a5a5c"/><rect x="754.06" y="0.3" width="1" height="6.6" fill="#7e7e80"/><rect x="760.10" y="0.3" width="1" height="3" fill="#5a5a5c"/><rect x="766.14" y="0.3" width="1" height="3" fill="#5a5a5c"/><rect x="772.17" y="0.3" width="1" height="3" fill="#5a5a5c"/><rect x="778.21" y="0.3" width="1" height="3" fill="#5a5a5c"/></svg>
<div style="left:164.8px;top:487.8px;width:57px;height:10.2px;background:#59595c;border-radius:2px;"></div>
<svg style="left:189.6px;top:482.3px" width="8" height="6"><path d="M4 0.2 V3" stroke="#d8d098" stroke-width="0.9"/><path d="M1.3 5.2 L4 2.6 L6.7 5.2 Z" fill="#c8c088"/></svg>
<div style="left:163px;top:487.0px;height:12px;line-height:12px;color:#9cc0e8;font-size:9px;letter-spacing:0px;white-space:nowrap;width:59.6px;text-align:center;">0</div>
<div style="left:238.38px;top:487.2px;height:12px;line-height:12px;color:#c8c8c8;font-size:9px;letter-spacing:-0.2px;white-space:nowrap;width:30px;text-align:center;">10</div>
<div style="left:298.76px;top:487.2px;height:12px;line-height:12px;color:#c8c8c8;font-size:9px;letter-spacing:-0.2px;white-space:nowrap;width:30px;text-align:center;">20</div>
<div style="left:359.14px;top:487.2px;height:12px;line-height:12px;color:#c8c8c8;font-size:9px;letter-spacing:-0.2px;white-space:nowrap;width:30px;text-align:center;">30</div>
<div style="left:419.52px;top:487.2px;height:12px;line-height:12px;color:#c8c8c8;font-size:9px;letter-spacing:-0.2px;white-space:nowrap;width:30px;text-align:center;">40</div>
<div style="left:479.90000000000003px;top:487.2px;height:12px;line-height:12px;color:#c8c8c8;font-size:9px;letter-spacing:-0.2px;white-space:nowrap;width:30px;text-align:center;">50</div>
<div style="left:540.28px;top:487.2px;height:12px;line-height:12px;color:#c8c8c8;font-size:9px;letter-spacing:-0.2px;white-space:nowrap;width:30px;text-align:center;">60</div>
<div style="left:600.6600000000001px;top:487.2px;height:12px;line-height:12px;color:#c8c8c8;font-size:9px;letter-spacing:-0.2px;white-space:nowrap;width:30px;text-align:center;">70</div>
<div style="left:661.04px;top:487.2px;height:12px;line-height:12px;color:#c8c8c8;font-size:9px;letter-spacing:-0.2px;white-space:nowrap;width:30px;text-align:center;">80</div>
<div style="left:721.4200000000001px;top:487.2px;height:12px;line-height:12px;color:#c8c8c8;font-size:9px;letter-spacing:-0.2px;white-space:nowrap;width:30px;text-align:center;">90</div>
<div style="left:781.8000000000001px;top:487.2px;height:12px;line-height:12px;color:#c8c8c8;font-size:9px;letter-spacing:-0.2px;white-space:nowrap;width:30px;text-align:center;">100</div>
<div style="left:842.1800000000001px;top:487.2px;height:12px;line-height:12px;color:#c8c8c8;font-size:9px;letter-spacing:-0.2px;white-space:nowrap;width:30px;text-align:center;">110</div>
<div style="left:902.5600000000001px;top:487.2px;height:12px;line-height:12px;color:#c8c8c8;font-size:9px;letter-spacing:-0.2px;white-space:nowrap;width:30px;text-align:center;">120</div>
<div style="left:949.6px;top:487.3px;width:50.4px;height:11.5px;background:#2f2f31;border-radius:2px 0 0 2px;"></div>
<div style="left:954.4px;top:487.0px;height:12px;line-height:12px;color:#c8c8c8;font-size:9px;letter-spacing:-0.2px;white-space:nowrap;">120</div>
<div style="left:163px;top:498.4px;width:1px;height:45px;background:#2a2a2c;"></div>
<div style="left:83px;top:487.7px;width:10.299999999999997px;height:10.300000000000011px;background:#545457;border-radius:1.5px;"></div>
<svg style="left:83px;top:487.7px" width="10.3" height="10.8"><path d="M4 2.8 L1.8 5.3 L4 7.8 M6.3 2.8 L8.5 5.3 L6.3 7.8" fill="none" stroke="#e8e8e8" stroke-width="1.5"/></svg>
<div style="left:96px;top:487.7px;width:11.900000000000006px;height:10.300000000000011px;background:#545457;border-radius:1.5px;"></div>
<div style="left:96px;top:486.85px;height:12px;line-height:12px;color:#bcbcbc;font-size:9px;letter-spacing:0px;white-space:nowrap;width:11.9px;text-align:center;">E</div>
<div style="left:83px;top:501.7px;width:10.299999999999997px;height:10.500000000000057px;background:#545457;border-radius:1.5px;"></div>
<svg style="left:83px;top:501.7px" width="10.3" height="10.8"><path d="M4 2.8 L1.8 5.3 L4 7.8 M6.3 2.8 L8.5 5.3 L6.3 7.8" fill="none" stroke="#e8e8e8" stroke-width="1.5"/></svg>
<div style="left:96px;top:501.7px;width:11.900000000000006px;height:10.500000000000057px;background:#545457;border-radius:1.5px;"></div>
<div style="left:96px;top:500.95000000000005px;height:12px;line-height:12px;color:#bcbcbc;font-size:9px;letter-spacing:0px;white-space:nowrap;width:11.9px;text-align:center;">E</div>
<div style="left:83px;top:515.2px;width:10.299999999999997px;height:10.599999999999909px;background:#545457;border-radius:1.5px;"></div>
<svg style="left:83px;top:515.2px" width="10.3" height="10.8"><path d="M4 2.8 L1.8 5.3 L4 7.8 M6.3 2.8 L8.5 5.3 L6.3 7.8" fill="none" stroke="#e8e8e8" stroke-width="1.5"/></svg>
<div style="left:96px;top:515.2px;width:11.900000000000006px;height:10.599999999999909px;background:#545457;border-radius:1.5px;"></div>
<div style="left:96px;top:514.5px;height:12px;line-height:12px;color:#bcbcbc;font-size:9px;letter-spacing:0px;white-space:nowrap;width:11.9px;text-align:center;">E</div>
<div style="left:111px;top:487.7px;width:50.6px;height:10.5px;background:#2f2f31;border-radius:2px;"></div>
<div style="left:111px;top:487.0px;height:12px;line-height:12px;color:#9cc0e8;font-size:9px;letter-spacing:0px;white-space:nowrap;width:46.5px;text-align:right;">0</div>
<div style="left:116.7px;top:501.0px;height:12px;line-height:12px;color:#c8c8c8;font-size:8.5px;letter-spacing:-0.35px;white-space:nowrap;">Current Item</div>
<div style="left:165px;top:501.7px;width:206.7px;height:10.500000000000057px;background:#545457;border-radius:1.5px;"></div>
<svg style="left:168.5px;top:503px" width="10" height="9"><rect x="0.8" y="1" width="7.6" height="3" rx="1" fill="#f0f0f0"/><rect x="0.8" y="4.6" width="7.6" height="3.4" rx="1" fill="#f0f0f0"/><rect x="2" y="0" width="1.5" height="1.4" fill="#f0f0f0"/><rect x="6" y="0" width="1.5" height="1.4" fill="#f0f0f0"/></svg>
<div style="left:179.8px;top:501.0px;height:12px;line-height:12px;color:#d0d0d0;font-size:8.5px;letter-spacing:-0.35px;white-space:nowrap;">Camera</div>
<svg style="left:362.7px;top:504.4px" width="7.6" height="5.2"><polyline points="1,1 3.8,4.2 6.6,1" fill="none" stroke="#e6e6e6" stroke-width="1.45"/></svg>
<div style="left:373.2px;top:501.7px;width:9.800000000000011px;height:10.500000000000057px;background:#3d3d40;border-radius:1.5px;"></div>
<svg style="left:373.2px;top:501.7px" width="10" height="10.5"><rect x="1.2" y="1.6" width="7.6" height="7.6" fill="none" stroke="#e0e0e0" stroke-width="1"/><path d="M1.2 3.8 H8.8" stroke="#e0e0e0" stroke-width="1"/><path d="M3 6.5 H7" stroke="#e0e0e0" stroke-width="1"/></svg>
<div style="left:388.2px;top:501.7px;width:71.19999999999999px;height:10.500000000000057px;background:#545457;border-radius:1.5px;"></div>
<div style="left:391.7px;top:501.0px;height:12px;line-height:12px;color:#c8c8c8;font-size:8.5px;letter-spacing:-0.35px;white-space:nowrap;">Properties</div>
<div style="left:440px;top:501.5px;height:12px;line-height:12px;color:#8a8a8a;font-size:8.5px;letter-spacing:0px;white-space:nowrap;width:15px;text-align:right;">p</div>
<div style="left:464.3px;top:501.7px;width:11.699999999999989px;height:10.500000000000057px;background:#4a6f99;border-radius:1.5px;"></div>
<svg style="left:464.3px;top:501.7px" width="12" height="10.5"><path d="M2.8 5.5 L5 8 L9.5 2.5" fill="none" stroke="#f4f4f4" stroke-width="1.6"/></svg>
<div style="left:477.8px;top:501.7px;width:115.90000000000003px;height:10.500000000000057px;background:#545457;border-radius:1.5px;"></div>
<div style="left:480.8px;top:501.0px;height:12px;line-height:12px;color:#d0d0d0;font-size:8.5px;letter-spacing:-0.35px;white-space:nowrap;">Auto Key: All Channels</div>
<svg style="left:584.7px;top:504.4px" width="7.6" height="5.2"><polyline points="1,1 3.8,4.2 6.6,1" fill="none" stroke="#e6e6e6" stroke-width="1.45"/></svg>
<div style="left:165px;top:515.6px;width:52.900000000000006px;height:10.799999999999955px;background:#545457;border-radius:1.5px;"></div>
<div style="left:168px;top:515.0px;height:12px;line-height:12px;color:#cfcfcf;font-size:8.5px;letter-spacing:-0.35px;white-space:nowrap;">Objects</div>
<div style="left:195.9px;top:515.0px;height:12px;line-height:12px;color:#8c8c8c;font-size:8.5px;letter-spacing:-0.2px;white-space:nowrap;width:19px;text-align:right;">+O</div>
<div style="left:219px;top:515.6px;width:52.89999999999998px;height:10.799999999999955px;background:#545457;border-radius:1.5px;"></div>
<div style="left:222px;top:515.0px;height:12px;line-height:12px;color:#cfcfcf;font-size:8.5px;letter-spacing:-0.35px;white-space:nowrap;">Bones</div>
<div style="left:249.89999999999998px;top:515.0px;height:12px;line-height:12px;color:#8c8c8c;font-size:8.5px;letter-spacing:-0.2px;white-space:nowrap;width:19px;text-align:right;">+B</div>
<div style="left:273px;top:515.6px;width:53.39999999999998px;height:10.799999999999955px;background:#545457;border-radius:1.5px;"></div>
<div style="left:276px;top:515.0px;height:12px;line-height:12px;color:#cfcfcf;font-size:8.5px;letter-spacing:-0.35px;white-space:nowrap;">Lights</div>
<div style="left:304.4px;top:515.0px;height:12px;line-height:12px;color:#8c8c8c;font-size:8.5px;letter-spacing:-0.2px;white-space:nowrap;width:19px;text-align:right;">+L</div>
<div style="left:327.2px;top:515.6px;width:56.5px;height:10.799999999999955px;background:#4a6f99;border-radius:1.5px;"></div>
<div style="left:330.2px;top:515.0px;height:12px;line-height:12px;color:#d8e0ea;font-size:8.5px;letter-spacing:-0.35px;white-space:nowrap;">Cameras</div>
<div style="left:361.7px;top:515.0px;height:12px;line-height:12px;color:#2c4a70;font-size:8.5px;letter-spacing:-0.2px;white-space:nowrap;width:19px;text-align:right;">+C</div>
<div style="left:387.2px;top:515.2px;width:73px;height:11.3px;background:#2f2f31;border-radius:2px;"></div>
<div style="left:391.7px;top:515.0px;height:12px;line-height:12px;color:#c8c8c8;font-size:8.5px;letter-spacing:-0.35px;white-space:nowrap;">Sel:</div>
<div style="left:430px;top:515.0px;height:12px;line-height:12px;color:#c8c8c8;font-size:8.5px;letter-spacing:0px;white-space:nowrap;width:26px;text-align:right;">1</div>
<div style="left:464px;top:515.7px;width:129.70000000000005px;height:10.5px;background:#545457;border-radius:1.5px;"></div>
<div style="left:467.5px;top:515.0px;height:12px;line-height:12px;color:#cfcfcf;font-size:8.5px;letter-spacing:-0.35px;white-space:nowrap;">Create Key</div>
<div style="left:560px;top:515.0px;height:12px;line-height:12px;color:#888;font-size:8.5px;letter-spacing:-0.2px;white-space:nowrap;width:30px;text-align:right;">ret</div>
<div style="left:164px;top:528.7px;width:297px;height:12.5px;background:#2f2f31;"></div>
<div style="left:168px;top:528.9px;height:12px;line-height:12px;color:#cacaca;font-size:8.5px;letter-spacing:-0.35px;white-space:nowrap;">Drag mouse in view to move selected items. ALT while dragging snaps to items.</div>
<div style="left:464px;top:529.5px;width:129.70000000000005px;height:10.5px;background:#545457;border-radius:1.5px;"></div>
<div style="left:467.5px;top:528.8px;height:12px;line-height:12px;color:#cfcfcf;font-size:8.5px;letter-spacing:-0.35px;white-space:nowrap;">Delete Key</div>
<div style="left:560px;top:528.8px;height:12px;line-height:12px;color:#888;font-size:8.5px;letter-spacing:-0.2px;white-space:nowrap;width:30px;text-align:right;">del</div>
<div style="left:851.2px;top:501.7px;width:22.399999999999977px;height:10.300000000000011px;background:#545457;border-radius:1.5px;"></div>
<div style="left:875.2px;top:501.7px;width:24.299999999999955px;height:10.300000000000011px;background:#545457;border-radius:1.5px;"></div>
<div style="left:901.6px;top:501.7px;width:22.399999999999977px;height:10.300000000000011px;background:#545457;border-radius:1.5px;"></div>
<div style="left:925.6px;top:501.7px;width:22.899999999999977px;height:10.300000000000011px;background:#545457;border-radius:1.5px;"></div>
<div style="left:950px;top:501.7px;width:24.399999999999977px;height:10.300000000000011px;background:#545457;border-radius:1.5px;"></div>
<div style="left:976.3px;top:501.7px;width:22.40000000000009px;height:10.300000000000011px;background:#545457;border-radius:1.5px;"></div>
<svg style="left:850px;top:501.7px" width="150" height="11"><rect x="7.1" y="3.1" width="1.5999999999999996" height="5.200000000000001" fill="#ececec"/><path d="M13.2 3.1 L8.7 5.7 L13.2 8.3 Z" fill="#ececec"/><path d="M17.8 3.1 L13.2 5.7 L17.8 8.3 Z" fill="#ececec"/><circle cx="31.4" cy="4.4" r="1.7" fill="#a8a8a8"/><rect x="30.799999999999997" y="5" width="1.2" height="3.4" fill="#a8a8a8"/><path d="M40.2 3.1 L35.2 5.7 L40.2 8.3 Z" fill="#ececec"/><path d="M45.1 3.1 L40.2 5.7 L45.1 8.3 Z" fill="#ececec"/><path d="M61.5 3.1 L56.5 5.7 L61.5 8.3 Z" fill="#ececec"/><rect x="62.3" y="3.1" width="1.6000000000000014" height="5.200000000000001" fill="#ececec"/><rect x="65.5" y="3.1" width="1.5999999999999943" height="5.200000000000001" fill="#ececec"/><rect x="80.8" y="3.1" width="1.6000000000000085" height="5.200000000000001" fill="#ececec"/><rect x="84" y="3.1" width="1.5999999999999943" height="5.200000000000001" fill="#ececec"/><path d="M86.5 3.1 L91.5 5.7 L86.5 8.3 Z" fill="#ececec"/><path d="M104.4 3.1 L109.4 5.7 L104.4 8.3 Z" fill="#ececec"/><path d="M109.4 3.1 L114.4 5.7 L109.4 8.3 Z" fill="#ececec"/><circle cx="117.7" cy="4.4" r="1.7" fill="#a8a8a8"/><rect x="117.10000000000001" y="5" width="1.2" height="3.4" fill="#a8a8a8"/><path d="M131.4 3.1 L136 5.7 L131.4 8.3 Z" fill="#ececec"/><path d="M136 3.1 L140.6 5.7 L136 8.3 Z" fill="#ececec"/><rect x="141.4" y="3.1" width="1.5999999999999943" height="5.200000000000001" fill="#ececec"/></svg>
<div style="left:851.2px;top:515.6px;width:69.59999999999991px;height:10.399999999999977px;background:#545457;border-radius:1.5px;"></div>
<div style="left:854.5px;top:514.8px;height:12px;line-height:12px;color:#d0d0d0;font-size:8.5px;letter-spacing:-0.35px;white-space:nowrap;">Preview</div>
<svg style="left:911.7px;top:518.1999999999999px" width="7.6" height="5.2"><polyline points="1,1 3.8,4.2 6.6,1" fill="none" stroke="#e6e6e6" stroke-width="1.45"/></svg>
<div style="left:925.6px;top:515.6px;width:22.899999999999977px;height:10.399999999999977px;background:#545457;border-radius:1.5px;"></div>
<div style="left:950px;top:515.6px;width:24.700000000000045px;height:10.399999999999977px;background:#4a6f99;border-radius:1.5px;"></div>
<div style="left:976.3px;top:515.6px;width:22.40000000000009px;height:10.399999999999977px;background:#545457;border-radius:1.5px;"></div>
<svg style="left:925px;top:515.6px" width="75" height="11"><path d="M14.2 2.9 L8.9 5.55 L14.2 8.2 Z" fill="#ececec"/><rect x="34.7" y="2.9" width="1.5" height="5.299999999999999" fill="#ececec"/><rect x="37.8" y="2.9" width="1.5" height="5.299999999999999" fill="#ececec"/><path d="M59 2.9 L64.3 5.55 L59 8.2 Z" fill="#ececec"/></svg>
<div style="left:851.2px;top:529.2px;width:19.5px;height:10.799999999999955px;background:#545457;border-radius:1.5px;"></div>
<div style="left:853px;top:528.6px;height:12px;line-height:12px;color:#9a9a9a;font-size:8.5px;letter-spacing:-0.3px;white-space:nowrap;">&#8624;^Z</div>
<div style="left:872px;top:529.2px;width:12px;height:10.799999999999955px;background:#545457;border-radius:1.5px;"></div>
<svg style="left:874.2px;top:532.0px" width="7.6" height="5.2"><polyline points="1,1 3.8,4.2 6.6,1" fill="none" stroke="#e6e6e6" stroke-width="1.45"/></svg>
<div style="left:887.2px;top:529.2px;width:20.299999999999955px;height:10.799999999999955px;background:#333335;border-radius:1.5px;"></div>
<svg style="left:893px;top:530.5px" width="8" height="8"><path d="M2 7 V3.5 H5.5 M4 2 L5.8 3.5 L4 5" fill="none" stroke="#6a6a6a" stroke-width="1"/></svg>
<div style="left:909.1px;top:529.2px;width:11.699999999999932px;height:10.799999999999955px;background:#333335;border-radius:1.5px;"></div>
<svg style="left:911.2px;top:532.0px" width="7.6" height="5.2"><polyline points="1,1 3.8,4.2 6.6,1" fill="none" stroke="#6a6a6a" stroke-width="1.45"/></svg>
<div style="left:927.7px;top:528.6px;height:12px;line-height:12px;color:#c8c8c8;font-size:8.5px;letter-spacing:-0.35px;white-space:nowrap;">Step</div>
<div style="left:949.3px;top:529.2px;width:50.7px;height:10.8px;background:#2f2f31;border-radius:2px 0 0 2px;"></div>
<div style="left:954px;top:528.6px;height:12px;line-height:12px;color:#c8c8c8;font-size:8.5px;letter-spacing:0px;white-space:nowrap;">1</div>
<div style="left:0px;top:541.2px;width:1000px;height:2.8px;background:#11151b;"></div>
<div style="left:0px;top:541.6px;width:1000px;height:0.9px;background:#39414a;"></div>
<div style="left:78px;top:541.8px;width:115px;height:2.2px;background:#c4c4c4;"></div>
<div style="left:229px;top:541.8px;width:116px;height:2.2px;background:#e8e8e8;"></div>
<div style="left:348px;top:541.8px;width:114px;height:2.2px;background:#dcdcdc;"></div>
<div style="left:990px;top:541.8px;width:10px;height:2.2px;background:#a0a0a0;"></div>
<div style="left:9.6px;top:540.5px;width:20.4px;height:8px;border-radius:50%;background:#8aa0b8"></div>
<div style="left:15px;top:542.2px;width:9px;height:4px;border-radius:50%;background:#d05828"></div>
<div style="left:0.8px;top:521.9px;width:115.6px;height:18.9px;border-radius:3.5px 4px 1px 1px;background:linear-gradient(90deg,#9aa0a6 0,#b4b8bc 12%,#a8adb2 30%,#8e959c 60%,#8a9198 100%);box-shadow:inset 0 0 0 1px #c4c9ce,0 0 0 0.6px #4a5058"></div>
<div style="left:37px;top:522.5px;width:74.6px;height:13px;border-radius:0 0 3px 2px;background:linear-gradient(#9aa2aa,#7c848c);box-shadow:inset 0 0 0 0.8px #b4bac0"></div>
<div style="left:57px;top:522.8px;width:0.8px;height:12.5px;background:#b8bec4;"></div>
<div style="left:77.4px;top:522.8px;width:0.8px;height:12.5px;background:#b8bec4;"></div>
<div style="left:3px;top:536.6px;width:111px;height:1px;background:rgba(220,225,230,.6);"></div>
<svg style="left:5.5px;top:524.4px" width="13" height="13"><circle cx="6.2" cy="6.2" r="6" fill="#12b4ea"/><path d="M2.3 5.8 Q3.8 1.8 7.3 2.8 M3.8 7.8 Q4.8 4.8 7.8 5.8 Q9.3 7.8 6.8 9.3 Q4.8 9.8 4.3 7.8 M8.8 3.8 L10.3 5.3 M6 10.3 Q9.5 10.5 11 7.5" stroke="#05162a" stroke-width="1.3" fill="none"/></svg>
<div style="left:21.5px;top:525.0px;height:12px;line-height:12px;color:#2a2a48;font-size:9.5px;letter-spacing:-0.3px;white-space:nowrap;">(u...</div>
<svg style="left:37px;top:522.5px" width="75" height="13"><rect x="9" y="3" width="5.2" height="5.2" fill="none" stroke="#f4f4f4" stroke-width="1.2"/><rect x="7.2" y="4.6" width="5.4" height="5.4" fill="#c8ccd0" stroke="#f4f4f4" stroke-width="1.3"/><rect x="8.9" y="6.3" width="2" height="2" fill="#4a5058"/><rect x="27.6" y="3.8" width="6.4" height="4.8" fill="none" stroke="#f4f4f4" stroke-width="1.4"/><path d="M55.2 3.4 L60.4 9 M60.4 3.4 L55.2 9" stroke="#f8f8f8" stroke-width="1.8"/></svg>
</body></html>
